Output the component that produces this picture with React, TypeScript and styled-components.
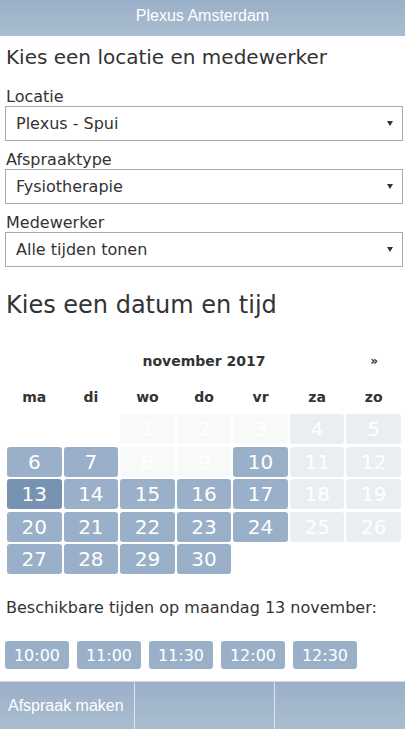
import React from "react";
import styled, { createGlobalStyle, css } from "styled-components";

const GlobalStyle = createGlobalStyle`
  html, body { margin: 0; padding: 0; background: #fff; }
  body {
    font-family: "DejaVu Sans", Verdana, sans-serif;
    color: #333;
    width: 405px;
    overflow: hidden;
  }
  * { box-sizing: border-box; }
`;

const Page = styled.div`
  display: flex;
  flex-direction: column;
  width: 405px;
  min-height: 729px;
`;

const TopBar = styled.header`
  height: 36px;
  display: flex;
  align-items: center;
  justify-content: center;
  padding-bottom: 4px;
  background: linear-gradient(to bottom, #9ab0c8, #aabdd0);
  color: #fff;
  font-family: "Liberation Sans", Arial, sans-serif;
  font-size: 16px;
`;

const Main = styled.main`
  padding: 0 2px 0 5px;
  flex: 1;
`;

const Heading = styled.h1<{ $size: number; $top: number; $bottom: number }>`
  margin: ${(p) => p.$top}px 0 ${(p) => p.$bottom}px 1px;
  font-size: ${(p) => p.$size}px;
  line-height: ${(p) => Math.round(p.$size * 1.2)}px;
  font-weight: normal;
  color: #333;
`;

const Field = styled.div<{ $first?: boolean }>`
  display: flex;
  flex-direction: column;
  margin-top: ${(p) => (p.$first ? 0 : 9)}px;
`;

const Label = styled.label`
  font-size: 16px;
  line-height: 19px;
  padding-left: 1px;
  color: #333;
`;

const SelectWrap = styled.div`
  position: relative;
  width: 398px;
  height: 35px;
`;

const Select = styled.select`
  appearance: none;
  -webkit-appearance: none;
  width: 100%;
  height: 100%;
  border: 1px solid #aaa;
  border-radius: 0;
  background: #fff;
  padding: 0 24px 0 10px;
  font-family: "DejaVu Sans", Verdana, sans-serif;
  font-size: 16px;
  color: #333;
  outline: none;
`;

const Caret = styled.span`
  position: absolute;
  right: 10px;
  top: 15px;
  width: 0;
  height: 0;
  border-left: 3px solid transparent;
  border-right: 3px solid transparent;
  border-top: 5px solid #333;
  pointer-events: none;
`;

const gridCols = css`
  display: grid;
  grid-template-columns: repeat(7, 1fr);
  column-gap: 2px;
  padding: 0 2px;
  width: 398px;
`;

const Calendar = styled.section`
  margin-top: 26px;
`;

const TitleRow = styled.div`
  ${gridCols};
  height: 30px;
  align-items: center;
  font-weight: bold;
  font-size: 14px;
  line-height: 30px;
`;

const MonthTitle = styled.div`
  grid-column: 2 / span 5;
  text-align: center;
`;

const NextLink = styled.div`
  grid-column: 7;
  text-align: center;
  font-size: 12px;
  padding-left: 1px;
`;

const WeekRow = styled.div`
  ${gridCols};
  margin-top: 8px;
  height: 26px;
  line-height: 26px;
  font-weight: bold;
  font-size: 14px;
  text-align: center;
`;

const DaysGrid = styled.div`
  ${gridCols};
  margin-top: 4px;
  grid-auto-rows: 30px;
  row-gap: 2.5px;
`;

type DayState = "past" | "weekend" | "open" | "selected" | "empty";

const dayBg: Record<DayState, string> = {
  past: "#f8fafa",
  weekend: "#eaeef1",
  open: "#9ab0c8",
  selected: "#7893b2",
  empty: "transparent",
};

const DayCell = styled.div<{ $state: DayState }>`
  background: ${(p) => dayBg[p.$state]};
  border-radius: 3px;
  color: #fff;
  font-size: 20px;
  line-height: 30px;
  text-align: center;
`;

const Info = styled.p`
  margin: 24px 0 0 1px;
  font-size: 16px;
  line-height: 20px;
  color: #333;
`;

const Times = styled.div`
  display: flex;
  gap: 8px;
  margin-top: 23px;
`;

const TimeButton = styled.button`
  width: 64px;
  height: 28px;
  border: none;
  border-radius: 3px;
  background: #9ab0c8;
  color: #fff;
  font-family: "DejaVu Sans", Verdana, sans-serif;
  font-size: 16px;
  padding: 0;
`;

const Footer = styled.footer`
  margin-top: 12px;
  border-top: 1px solid #d3d8de;
  height: 48px;
  display: grid;
  grid-template-columns: 135px 140px 1fr;
  background: linear-gradient(to bottom, #9ab0c8, #aabdd0);
`;

const FooterCell = styled.div<{ $last?: boolean }>`
  display: flex;
  align-items: center;
  padding-left: 8px;
  border-right: ${(p) => (p.$last ? "none" : "1px solid #dde3ea")};
  color: #fff;
  font-family: "Liberation Sans", Arial, sans-serif;
  font-size: 16px;
`;

const fields = [
  { label: "Locatie", value: "Plexus - Spui" },
  { label: "Afspraaktype", value: "Fysiotherapie" },
  { label: "Medewerker", value: "Alle tijden tonen" },
];

const weekdays = ["ma", "di", "wo", "do", "vr", "za", "zo"];
const openDays = new Set([6, 7, 10, 14, 15, 16, 17, 20, 21, 22, 23, 24, 27, 28, 29, 30]);

function stateFor(day: number, col: number): DayState {
  if (day === 13) return "selected";
  if (openDays.has(day)) return "open";
  if (col >= 5) return "weekend";
  return "past";
}

const times = ["10:00", "11:00", "11:30", "12:00", "12:30"];

export default function App() {
  const cells: { day: number | null; col: number }[] = [];
  for (let i = 0; i < 2; i++) cells.push({ day: null, col: i });
  for (let d = 1; d <= 30; d++) cells.push({ day: d, col: (d + 1) % 7 });

  return (
    <Page>
      <GlobalStyle />
      <TopBar>Plexus Amsterdam</TopBar>
      <Main>
        <Heading $size={20} $top={9} $bottom={18}>
          Kies een locatie en medewerker
        </Heading>
        {fields.map((f, i) => (
          <Field key={f.label} $first={i === 0}>
            <Label>{f.label}</Label>
            <SelectWrap>
              <Select defaultValue={f.value}>
                <option>{f.value}</option>
              </Select>
              <Caret />
            </SelectWrap>
          </Field>
        ))}
        <Heading as="h2" $size={24} $top={24} $bottom={0}>
          Kies een datum en tijd
        </Heading>
        <Calendar>
          <TitleRow>
            <MonthTitle>november 2017</MonthTitle>
            <NextLink>»</NextLink>
          </TitleRow>
          <WeekRow>
            {weekdays.map((w) => (
              <div key={w}>{w}</div>
            ))}
          </WeekRow>
          <DaysGrid>
            {cells.map((c, i) =>
              c.day === null ? (
                <DayCell key={`e${i}`} $state="empty" />
              ) : (
                <DayCell key={c.day} $state={stateFor(c.day, c.col)}>
                  {c.day}
                </DayCell>
              )
            )}
          </DaysGrid>
        </Calendar>
        <Info>Beschikbare tijden op maandag 13 november:</Info>
        <Times>
          {times.map((t) => (
            <TimeButton key={t}>{t}</TimeButton>
          ))}
        </Times>
      </Main>
      <Footer>
        <FooterCell>Afspraak maken</FooterCell>
        <FooterCell />
        <FooterCell $last />
      </Footer>
    </Page>
  );
}
